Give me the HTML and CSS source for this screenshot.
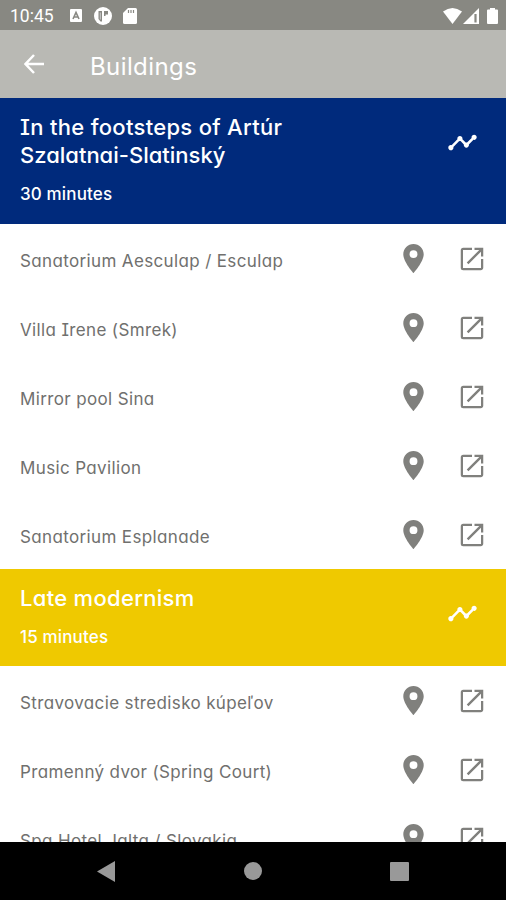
FILE: index.html
```html
<!DOCTYPE html>
<html lang="en">
<head>
  <meta charset="UTF-8">
  <title>Buildings</title>
  <link rel="stylesheet" href="styles.css">
</head>
<body>

  <!-- Icon shapes -->
  <svg class="icon-defs">
    <symbol id="pin" viewBox="0 0 24 24">
      <path d="M12 2C8.130 2 5 5.130 5 9c0 5.250 7 13 7 13s7-7.750 7-13c0-3.870-3.130-7-7-7zm0 9.700a2.700 2.700 0 1 1 0-5.400 2.700 2.700 0 0 1 0 5.400z"/>
    </symbol>
    <symbol id="open" viewBox="0 0 24 24">
      <path d="M19.200 19.200H4.800V4.800H12V3H5a2 2 0 0 0-2 2v14a2 2 0 0 0 2 2h14c1.100 0 2-.9 2-2v-7h-1.800v7.200zM14 3v1.800h3.800l-10 10 1.350 1.350L19.200 6.100V10H21V3h-7z"/>
    </symbol>
    <symbol id="timeline" viewBox="0 0 24 24">
      <path d="M23 8c0 1.100-.9 2-2 2-.18 0-.35-.02-.51-.07l-3.560 3.550c.05.16.07.34.07.52 0 1.100-.9 2-2 2s-2-.9-2-2c0-.18.02-.36.07-.52l-2.550-2.550c-.16.05-.34.07-.52.07s-.36-.02-.52-.07l-4.550 4.560c.05.16.07.33.07.51 0 1.100-.9 2-2 2s-2-.9-2-2 .9-2 2-2c.18 0 .35.02.51.07l4.560-4.550C8.020 9.360 8 9.180 8 9c0-1.100.9-2 2-2s2 .9 2 2c0 .18-.02.36-.07.52l2.550 2.550c.16-.05.34-.07.52-.07s.36.02.52.07l3.550-3.560C19.020 8.350 19 8.180 19 8c0-1.100.9-2 2-2s2 .9 2 2z"/>
    </symbol>
  </svg>

  <div class="screen">
    <!-- Status bar -->
    <div class="status-bar">
      <span class="clock">10:45</span>
      <svg class="keyboard-icon" width="12" height="13" viewBox="0 0 12 13">
        <rect width="12" height="13" rx="1" fill="#fff"/>
        <path d="M3 10L6 3.500L9 10M4.200 8h3.600" fill="none" stroke="#888882" stroke-width="1.600"/>
      </svg>
      <svg class="app-icon" width="18" height="18" viewBox="0 0 18 18">
        <circle cx="9" cy="9" r="9" fill="#fff"/>
        <path d="M4.500 4H8v10.500H6.500L4.500 12zM10 4h4v3.500h-2.500V9H10z" fill="#888882"/>
        <path d="M6.300 5.500v7" stroke="#ccc" stroke-width="1"/>
      </svg>
      <svg class="card-icon" width="14" height="16" viewBox="0 0 14 16">
        <path d="M5 0h7.500Q14 0 14 1.500v13q0 1.500-1.500 1.500h-11Q0 16 0 14.500V5z" fill="#fff"/>
        <path d="M5.500 2v3M8 2v3M10.500 2v3" stroke="#888882" stroke-width="1.200"/>
      </svg>
      <div class="status-right">
        <svg width="19" height="16" viewBox="0 0 19 16">
          <path d="M0 3.500Q9.500-3.500 19 3.500L9.500 16z" fill="#fff"/>
        </svg>
        <svg width="16" height="16" viewBox="0 0 16 16">
          <path d="M16 0v16H0z" fill="#fff"/>
          <path d="M12.500 6v8.500" stroke="#888882" stroke-width="2.200"/>
        </svg>
        <svg class="battery" width="11" height="16" viewBox="0 0 11 16">
          <path d="M3 0h5v1.500h2q1 0 1 1V15q0 1-1 1H1q-1 0-1-1V2.500q0-1 1-1h2z" fill="#fff"/>
        </svg>
      </div>
    </div>

    <!-- App bar -->
    <div class="app-bar">
      <svg class="back" width="20" height="20" viewBox="0 0 20 20">
        <path d="M10 1L1.500 10l8.500 9M2 10h18" fill="none" stroke="#fff" stroke-width="2.500"/>
      </svg>
      <h1>Buildings</h1>
    </div>

    <div class="list">
      <div class="trail blue">
        <div>
          <h2>In the footsteps of Artúr<br><span class="second-line">Szalatnai-Slatinský</span></h2>
          <p>30 minutes</p>
        </div>
        <svg class="timeline"><use href="#timeline"/></svg>
      </div>
      <div class="row"><span>Sanatorium Aesculap / Esculap</span><svg class="pin"><use href="#pin"/></svg><svg class="open"><use href="#open"/></svg></div>
      <div class="row"><span>Villa Irene (Smrek)</span><svg class="pin"><use href="#pin"/></svg><svg class="open"><use href="#open"/></svg></div>
      <div class="row"><span>Mirror pool Sina</span><svg class="pin"><use href="#pin"/></svg><svg class="open"><use href="#open"/></svg></div>
      <div class="row"><span>Music Pavilion</span><svg class="pin"><use href="#pin"/></svg><svg class="open"><use href="#open"/></svg></div>
      <div class="row"><span>Sanatorium Esplanade</span><svg class="pin"><use href="#pin"/></svg><svg class="open"><use href="#open"/></svg></div>

      <div class="trail yellow">
        <div>
          <h2>Late modernism</h2>
          <p>15 minutes</p>
        </div>
        <svg class="timeline"><use href="#timeline"/></svg>
      </div>
      <div class="row"><span>Stravovacie stredisko kúpeľov</span><svg class="pin"><use href="#pin"/></svg><svg class="open"><use href="#open"/></svg></div>
      <div class="row"><span>Pramenný dvor (Spring Court)</span><svg class="pin"><use href="#pin"/></svg><svg class="open"><use href="#open"/></svg></div>
      <div class="row"><span>Spa Hotel Jalta / Slovakia</span><svg class="pin"><use href="#pin"/></svg><svg class="open"><use href="#open"/></svg></div>
    </div>

    <!-- Navigation bar -->
    <div class="nav-bar">
      <svg width="18" height="21" viewBox="0 0 18 21"><path d="M18 0v21L0 10.500z"/></svg>
      <svg width="18" height="18" viewBox="0 0 18 18"><circle cx="9" cy="9" r="9"/></svg>
      <svg width="19" height="19" viewBox="0 0 19 19"><rect width="19" height="19" rx="1"/></svg>
    </div>
  </div>

</body>
</html>
```
FILE: styles.css
```css
body {
  margin: 0;
  font-family: Inter, "Open Sans", sans-serif;
  font-feature-settings: "cv11", "cv08";
  background: #fff;
}

h1, h2, p {
  margin: 0;
}

svg {
  display: block;
  flex: none;
}

.icon-defs {
  display: none;
}

.screen {
  display: flex;
  flex-direction: column;
  height: 900px;
  overflow: hidden;
}

.status-bar {
  display: flex;
  align-items: center;
  flex: none;
  height: 30px;
  box-sizing: border-box;
  padding: 1px 8px 0 10px;
  background: #888882;
  color: #fff;
}

.clock {
  width: 60px;
  font-family: Roboto, sans-serif;
  font-size: 17.5px;
}

.app-icon {
  margin-left: 12px;
}

.card-icon {
  margin-left: 11px;
}

.status-right {
  display: flex;
  gap: 1px;
  margin-left: auto;
}

.battery {
  margin-left: 7px;
}

.app-bar {
  display: flex;
  align-items: center;
  flex: none;
  height: 68px;
  box-sizing: border-box;
  padding: 0 24px;
  background: #b9b9b4;
  color: #fff;
}

.back {
  margin-bottom: 1px;
}

.app-bar h1 {
  margin: 5px 0 0 46px;
  font-size: 24px;
  font-weight: 400;
  letter-spacing: 0.4px;
}

.list {
  flex: 1;
  min-height: 0;
  overflow: hidden;
}

.trail {
  display: flex;
  justify-content: space-between;
  align-items: flex-start;
  box-sizing: border-box;
  padding: 15px 28px 0 20px;
  color: #fff;
}

.blue {
  height: 126px;
  background: #002a7c;
}

.yellow {
  height: 97px;
  background: #efc900;
}

.trail h2 {
  font-size: 22px;
  font-weight: 500;
  line-height: 28px;
  letter-spacing: 0.3px;
}

.trail h2 .second-line {
  letter-spacing: 0;
}

.trail p {
  margin-top: 13px;
  font-size: 17px;
  font-weight: 500;
  line-height: 24px;
  letter-spacing: 0.15px;
}

.timeline {
  width: 31px;
  height: 31px;
  margin-top: 14px;
  fill: #fff;
}

.row {
  display: flex;
  align-items: center;
  height: 69px;
  padding: 0 19px 0 20px;
  color: #70706e;
  font-size: 17px;
  letter-spacing: 0.36px;
}

.row span {
  flex: 1;
  padding-top: 4px;
}

.pin {
  width: 35px;
  height: 35px;
  fill: #80807d;
}

.open {
  width: 30px;
  height: 30px;
  margin-left: 26px;
  fill: #80807d;
}

.nav-bar {
  display: flex;
  align-items: center;
  justify-content: space-between;
  flex: none;
  height: 58px;
  box-sizing: border-box;
  padding: 0 97px;
  background: #000;
  fill: #999;
}
```
